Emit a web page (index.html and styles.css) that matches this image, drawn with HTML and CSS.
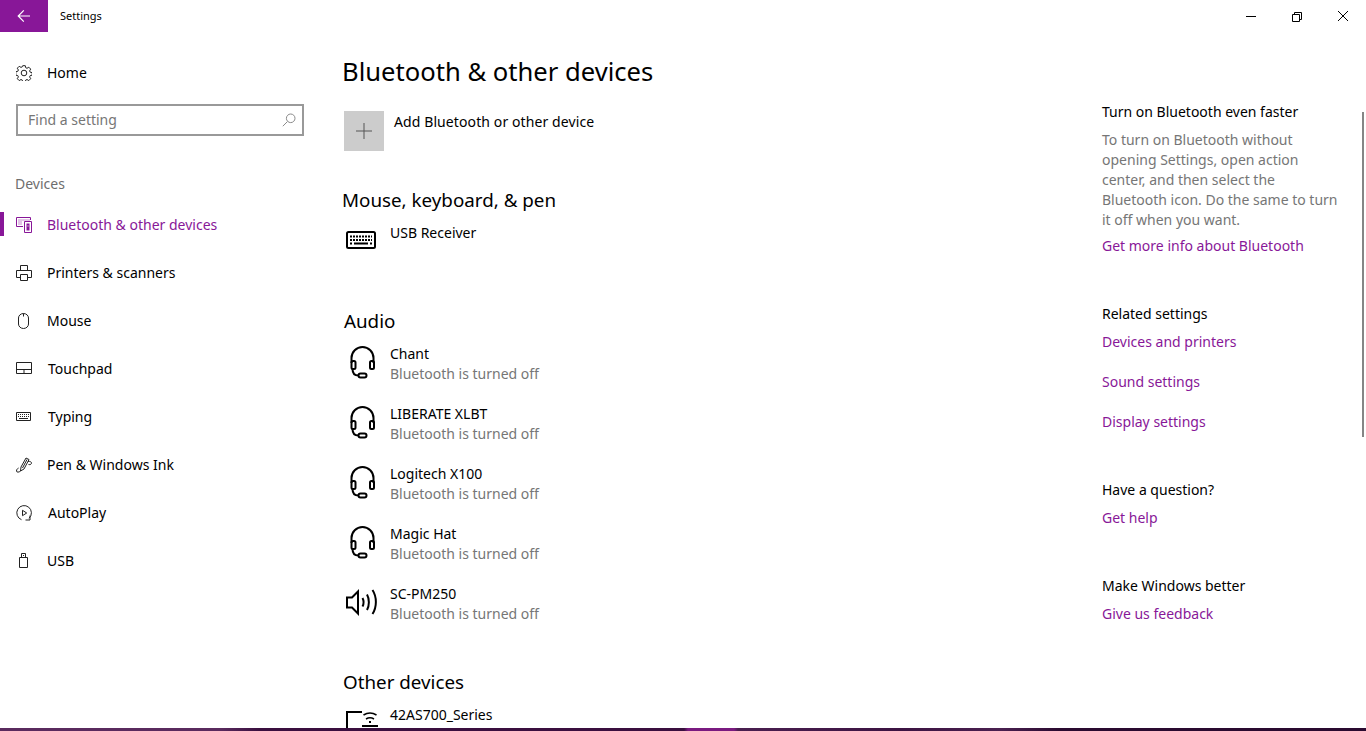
FILE: index.html
```html
<!DOCTYPE html>
<html lang="en">
<head>
    <meta charset="UTF-8">
    <meta name="viewport" content="width=device-width, initial-scale=1.0">
    <title>Settings</title>
    <link rel="stylesheet" href="styles.css">
</head>
<body>

    <header class="titlebar">
        <button class="back">
            <svg width="16" height="16" viewBox="0 0 16 16" fill="none" stroke="#fff" stroke-width="1.2"><path d="M2.500 8H14M7.800 2.300 2.200 8l5.600 5.700"/></svg>
        </button>
        <div class="app-name">Settings</div>
        <div class="window-buttons">
            <svg width="46" height="32" viewBox="0 0 46 32" fill="none" stroke="#000"><path d="M18 16.500h10"/></svg>
            <svg width="46" height="32" viewBox="0 0 46 32" fill="none" stroke="#000"><path d="M18.500 14.500h7v7h-7zM20.500 14.500v-2h7v7h-2"/></svg>
            <svg width="46" height="32" viewBox="0 0 46 32" fill="none" stroke="#000"><path d="M18 11l10 10M28 11 18 21"/></svg>
        </div>
    </header>

    <div class="window">
        <nav class="sidebar">
            <div class="nav-item">
                <svg class="nav-icon" viewBox="0 0 16 16" fill="none" stroke="#222"><circle cx="8" cy="8" r="2.800"/><path d="M6.700.7h2.600l.4 2 1.300.6 1.800-1.100 1.900 1.900-1.100 1.800.6 1.300 2 .4v2.600l-2 .4-.6 1.300 1.100 1.800-1.900 1.900-1.800-1.100-1.300.6-.4 2H6.700l-.4-2-1.300-.6-1.800 1.100-1.900-1.900 1.100-1.800-.6-1.300-2-.4V6.700l2-.4.6-1.300-1.100-1.800 1.900-1.900L5 2.400l1.300-.6z"/></svg>
                <span>Home</span>
            </div>
            <div class="search">
                <span>Find a setting</span>
                <svg width="14" height="14" viewBox="0 0 14 14" fill="none" stroke="#8a8a8a"><circle cx="8.700" cy="5.300" r="4.300"/><path d="M5.500 8.500.8 13.200"/></svg>
            </div>
            <div class="nav-heading">Devices</div>
            <div class="nav-item active">
                <svg class="nav-icon" viewBox="0 0 16 16" fill="none" stroke="#881798"><path d="M7 9.500H.5v-9h14v2.500"/><path d="M2.500 3h1m1 0h1m1 0h1m1 0h1m1 0h1m1 0h1M2.500 5h1m1 0h1M2.500 7h1m1 0h1"/><path d="M8.500 4.500h7v11h-7z"/><path d="M10.500 6.500h3v7h-3z" fill="#881798" stroke="none"/><path d="M11.500 8.500h1v1h-1z" fill="#fff" stroke="none"/></svg>
                <span>Bluetooth &amp; other devices</span>
            </div>
            <div class="nav-item">
                <svg class="nav-icon" viewBox="0 0 16 16" fill="none" stroke="#222"><path d="M4.500 5.500v-5h7v5M4 12.500H.5v-7h15v7H12"/><path d="M4.500 9.500h7v6h-7z"/></svg>
                <span>Printers &amp; scanners</span>
            </div>
            <div class="nav-item">
                <svg class="nav-icon" viewBox="0 0 16 16" fill="none" stroke="#222"><path d="M2.500 5a5 4.500 0 0 1 10 0v6a5 4.500 0 0 1-10 0zM7.500.5v3"/></svg>
                <span>Mouse</span>
            </div>
            <div class="nav-item">
                <svg class="nav-icon" viewBox="0 0 16 16" fill="none" stroke="#222"><path d="M.5 1.500h15v11H.5zM.5 8.500h15M8 8.500v4"/></svg>
                <span class="nudge">Touchpad</span>
            </div>
            <div class="nav-item">
                <svg class="nav-icon" viewBox="0 0 16 16" fill="none" stroke="#222"><path d="M.5 3.500h14v8H.5z"/><path d="M2 5.500h11M2 7.500h11" stroke-dasharray="1 1"/><path d="M3 9.500h9"/></svg>
                <span class="nudge">Typing</span>
            </div>
            <div class="nav-item">
                <svg class="nav-icon" viewBox="0 0 16 16" fill="none" stroke="#222"><path d="M4.500 14 5 10l5-9 3 1.500L8 12zM6.500 11 11 2.500"/><path d="M4.500 14c-1.500 1.500-4 1.500-4 0 0-1.500 1-2.500 2-3M12 4.500c2-.5 3.500.5 3.500 1.500s-1 2-3 1.500"/></svg>
                <span>Pen &amp; Windows Ink</span>
            </div>
            <div class="nav-item">
                <svg class="nav-icon" viewBox="0 0 16 16" fill="none" stroke="#222"><path d="M5.500 14.700A7.300 7.300 0 1 1 13 13.300"/><path d="M6.500 5.300 10.700 8l-4.200 2.700zM14 10.500V15h-4.500"/></svg>
                <span class="nudge">AutoPlay</span>
            </div>
            <div class="nav-item">
                <svg class="nav-icon" viewBox="0 0 16 16" fill="none" stroke="#222"><path d="M3.500 4.500h8v10h-8zM5.500 4.500V.5h4v4M7 2.500h1"/></svg>
                <span>USB</span>
            </div>
        </nav>

        <main class="content">
            <h1>Bluetooth &amp; other devices</h1>
            <div class="add-device">
                <div class="add-box">
                    <svg width="16" height="16" viewBox="0 0 16 16" stroke="#555"><path d="M8 0v16M0 8h16"/></svg>
                </div>
                <span>Add Bluetooth or other device</span>
            </div>

            <h2>Mouse, keyboard, &amp; pen</h2>
            <div class="device">
                <svg class="device-icon" viewBox="0 0 32 38" fill="none" stroke="#000" stroke-width="2"><rect x="1" y="10" width="28" height="16" rx="1.500"/><path d="M4 14.500h22M4 18h22" stroke-dasharray="2 1"/><path d="M4 21.500h2m2 0h14m2 0h2"/></svg>
                <div class="device-name">USB Receiver</div>
            </div>

            <h2 class="audio">Audio</h2>
            <div class="device">
                <svg class="device-icon" viewBox="0 0 32 38" fill="none" stroke="#000" stroke-width="2"><path d="M5.500 20v-5a11 11 0 0 1 22 0v5"/><rect x="5.500" y="18" width="4" height="8" rx="1.500"/><rect x="24" y="18" width="4" height="8" rx="1.500"/><path d="M6.500 26c0 4 2 6.500 6 6.500"/><rect x="12.500" y="30.500" width="8" height="4" rx="2"/></svg>
                <div>
                    <div class="device-name">Chant</div>
                    <div class="device-status">Bluetooth is turned off</div>
                </div>
            </div>
            <div class="device">
                <svg class="device-icon" viewBox="0 0 32 38" fill="none" stroke="#000" stroke-width="2"><path d="M5.500 20v-5a11 11 0 0 1 22 0v5"/><rect x="5.500" y="18" width="4" height="8" rx="1.500"/><rect x="24" y="18" width="4" height="8" rx="1.500"/><path d="M6.500 26c0 4 2 6.500 6 6.500"/><rect x="12.500" y="30.500" width="8" height="4" rx="2"/></svg>
                <div>
                    <div class="device-name">LIBERATE XLBT</div>
                    <div class="device-status">Bluetooth is turned off</div>
                </div>
            </div>
            <div class="device">
                <svg class="device-icon" viewBox="0 0 32 38" fill="none" stroke="#000" stroke-width="2"><path d="M5.500 20v-5a11 11 0 0 1 22 0v5"/><rect x="5.500" y="18" width="4" height="8" rx="1.500"/><rect x="24" y="18" width="4" height="8" rx="1.500"/><path d="M6.500 26c0 4 2 6.500 6 6.500"/><rect x="12.500" y="30.500" width="8" height="4" rx="2"/></svg>
                <div>
                    <div class="device-name">Logitech X100</div>
                    <div class="device-status">Bluetooth is turned off</div>
                </div>
            </div>
            <div class="device">
                <svg class="device-icon" viewBox="0 0 32 38" fill="none" stroke="#000" stroke-width="2"><path d="M5.500 20v-5a11 11 0 0 1 22 0v5"/><rect x="5.500" y="18" width="4" height="8" rx="1.500"/><rect x="24" y="18" width="4" height="8" rx="1.500"/><path d="M6.500 26c0 4 2 6.500 6 6.500"/><rect x="12.500" y="30.500" width="8" height="4" rx="2"/></svg>
                <div>
                    <div class="device-name">Magic Hat</div>
                    <div class="device-status">Bluetooth is turned off</div>
                </div>
            </div>
            <div class="device">
                <svg class="device-icon" viewBox="0 0 32 38" fill="none" stroke="#000" stroke-width="2"><path d="M1 14.500h5l6-6v22l-6-6H1z"/><path d="M16.500 15c1.300 2.500 1.300 6 0 8.500M21 11.500c2.500 4.500 2.500 11 0 15.500M26.500 7c4.500 7 4.500 17 0 24"/></svg>
                <div>
                    <div class="device-name">SC-PM250</div>
                    <div class="device-status">Bluetooth is turned off</div>
                </div>
            </div>

            <h2 class="other">Other devices</h2>
            <div class="device">
                <svg class="device-icon" viewBox="0 0 32 38" fill="none" stroke="#000" stroke-width="2"><path d="M1 30V8h15M16 22h16"/><path d="M17.500 11c4-2.500 9-2.500 13 0M20 15c2.500-1.500 5.500-1.500 8 0" stroke-width="1.500"/><path d="M23 18h2"/></svg>
                <div class="device-name">42AS700_Series</div>
            </div>
        </main>

        <aside class="help">
            <section>
                <h3>Turn on Bluetooth even faster</h3>
                <p>To turn on Bluetooth without opening Settings, open action center, and then select the Bluetooth icon. Do the same to turn it off when you want.</p>
                <a>Get more info about Bluetooth</a>
            </section>
            <section class="help-related">
                <h3>Related settings</h3>
                <a>Devices and printers</a>
                <a>Sound settings</a>
                <a>Display settings</a>
            </section>
            <section>
                <h3>Have a question?</h3>
                <a>Get help</a>
            </section>
            <section>
                <h3>Make Windows better</h3>
                <a>Give us feedback</a>
            </section>
        </aside>

        <div class="scrollbar"></div>
    </div>

    <div class="taskbar-edge"></div>

</body>
</html>
```

FILE: styles.css
```css
body {
    font-family: "Noto Sans", "Open Sans", Arial, sans-serif;
    font-size: 14px;
    color: #000;
    background-color: #fff;
    margin: 0;
    height: 731px;
    display: flex;
    flex-direction: column;
    overflow: hidden;
}
.titlebar {
    display: flex;
    align-items: flex-start;
    height: 32px;
    flex: none;
}
.back {
    width: 48px;
    height: 32px;
    padding: 0;
    border: none;
    background-color: #881798;
    display: flex;
    align-items: center;
    justify-content: center;
}
.app-name {
    font-size: 11px;
    line-height: 32px;
    margin-left: 12px;
}
.window-buttons {
    margin-left: auto;
    display: flex;
}
.window {
    flex: 1;
    min-height: 0;
    display: flex;
    position: relative;
    overflow: hidden;
}
.sidebar {
    width: 320px;
    flex: none;
    padding-top: 17px;
}
.nav-item {
    height: 48px;
    display: flex;
    align-items: center;
    padding-left: 16px;
    gap: 15px;
    box-sizing: border-box;
}
.nav-item span {
    padding-bottom: 2px;
}
.nav-icon {
    width: 16px;
    height: 16px;
    flex: none;
}
.nudge {
    margin-left: 1px;
}
.nav-item.active {
    color: #881798;
    position: relative;
}
.nav-item.active::before {
    content: "";
    position: absolute;
    left: 0;
    top: 11px;
    width: 4px;
    height: 24px;
    background-color: #881798;
}
.search {
    margin: 7px 16px 0;
    height: 32px;
    box-sizing: border-box;
    border: 2px solid #999;
    display: flex;
    align-items: center;
    justify-content: space-between;
    padding: 0 6px 0 10px;
    color: #767676;
}
.search span {
    padding-bottom: 2px;
}
.nav-heading {
    color: #6e6e6e;
    padding-left: 15px;
    margin-top: 36px;
    line-height: 24px;
    margin-bottom: 5px;
}
.content {
    width: 782px;
    flex: none;
    padding-left: 22px;
    box-sizing: border-box;
}
h1 {
    font-size: 25.6px;
    font-weight: 400;
    line-height: 40px;
    margin: 20px 0 19px;
}
.add-device {
    display: flex;
    align-items: flex-start;
    gap: 10px;
    padding-left: 2px;
    line-height: 20px;
}
.add-device span {
    padding-top: 1px;
    letter-spacing: 0.1px;
}
.add-box {
    width: 40px;
    height: 40px;
    background-color: #ccc;
    display: flex;
    align-items: center;
    justify-content: center;
}
h2 {
    font-size: 18.8px;
    font-weight: 400;
    line-height: 28px;
    margin: 35px 0 8px;
}
h2.audio {
    margin: 25px 0 8px 2px;
}
h2.other {
    margin: 25px 0 8px 1px;
}
.device {
    display: flex;
    align-items: flex-start;
    gap: 12px;
    padding-left: 4px;
    height: 60px;
    line-height: 20px;
}
.device-icon {
    width: 32px;
    height: 38px;
    flex: none;
}
.device-name {
    padding-top: 1px;
}
.device-status {
    color: #767676;
}
.help {
    width: 264px;
    flex: none;
    padding-top: 70px;
    line-height: 20px;
}
.help section {
    margin-bottom: 48px;
}
.help h3 {
    font-size: 14px;
    font-weight: 400;
    margin: 0 0 8px;
    line-height: 20px;
}
.help p {
    margin: 0 0 6px;
    color: #767676;
    width: 240px;
}
.help a {
    display: block;
    color: #881798;
}
.help-related a + a {
    margin-top: 20px;
}
.scrollbar {
    position: absolute;
    right: 2px;
    top: 80px;
    width: 2px;
    height: 325px;
    background-color: #858585;
}
.taskbar-edge {
    flex: none;
    height: 3px;
    background: linear-gradient(90deg, #5a2a5e 0, #5a2a5e 220px, #3a0f3f 260px, #3a0f3f 684px, #7a1a80 688px, #7a1a80 734px, #4a1f50 738px, #3c1342 900px, #4a2050 1000px, #2a0a30 1060px, #2a0a30 100%);
}
```
